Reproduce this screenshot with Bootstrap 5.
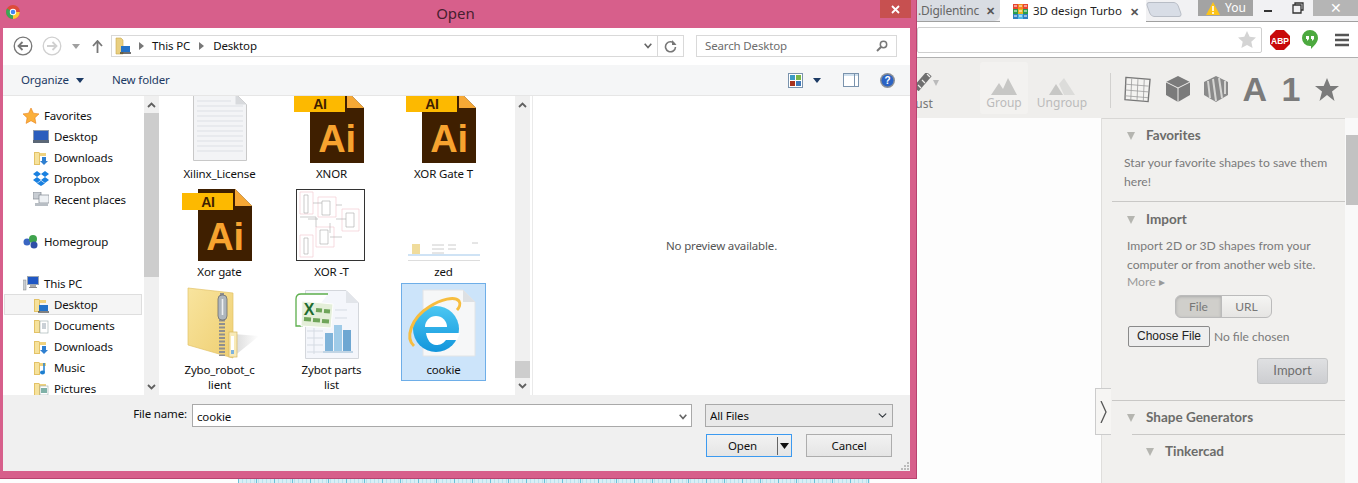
<!DOCTYPE html>
<html lang="en">
<head>
<meta charset="UTF-8" />
<title>Open</title>
<link href="https://cdn.jsdelivr.net/npm/bootstrap@5.3.3/dist/css/bootstrap.min.css" rel="stylesheet" />
<style>
html, body { height: 100%; margin: 0; overflow: hidden; background: #fff; }
body { font-family: "Noto Sans", sans-serif; font-size: 11.5px; color: #1a1a1a; }
svg { display: block; flex: none; }

/* browser behind the dialog */
.page-back { height: 483px; width: 1358px; }
.tab-strip { height: 22px; background: #f1f1f3; border-bottom: 1px solid #a0a0a0; }
.tab-off { width: 1000px; flex: none; height: 21px; background: #d9dde3; color: #666; font-size: 12px; letter-spacing: -.2px; padding-right: 5px; border-radius: 0 0 6px 0; justify-content: flex-end; }
.tab-off span { margin-right: 7px; }
.tab-off .tab-x { margin-right: 0; }
.tab-x { font-size: 11px; font-weight: 700; color: #555; line-height: 1; letter-spacing: 0; }
.tab-on { width: 146px; flex: none; height: 22px; background: #fff; font-size: 11.5px; color: #222; padding-left: 13px; margin-bottom: -1px; gap: 5px; }
.tab-on .tab-name { width: 92px; white-space: nowrap; }
.tab-new { width: 32px; height: 15px; flex: none; margin: 2px 0 0 2px; background: #d8dde6; border: 1px solid #b8bdc6; border-radius: 4px; transform: skewX(20deg); }
.you-tag { width: 55px; height: 16px; flex: none; margin-left: 18px; background: #a3a3a3; color: #fff; font-size: 12px; gap: 5px; padding-left: 8px; }
.win-btns { margin-left: auto; height: 16px; }
.win-btn { width: 30px; height: 16px; }
.win-close { width: 45px; height: 16px; background: #b5b5b5; color: #fff; font-size: 14px; line-height: 16px; text-align: center; }
.url-row { height: 36px; background: #fff; border-bottom: 1px solid #b0b0b0; padding-left: 917px; }
.omni { width: 345px; height: 26px; border: 1px solid #cfcfcf; border-radius: 2px; padding-right: 5px; }
.app-bar { height: 60px; background: #efeeec; position: relative; padding-left: 891px; color: #bbb; }
.adj-btn { width: 48px; font-size: 12px; color: #777; padding-top: 15px; text-align: center; }
.adj-btn svg { margin-bottom: 4px; }
.grp-btn { width: 48px; height: 52px; margin-left: 41px; margin-top: 4px; background: #f3f2f0; border-radius: 3px; font-size: 12px; line-height: 1; padding-top: 16px; }
.ungrp-btn { width: 56px; margin-left: 6px; font-size: 12px; line-height: 1; padding-top: 20px; }
.grp-btn svg, .ungrp-btn svg { margin-bottom: 2px; }
.bar-rule { width: 1px; height: 35px; background: #d2d1cf; margin: 15px 0 0 20px; }
.bar-tools { margin-left: 13px; width: 215px; height: 60px; color: #7b7b7b; justify-content: space-between; padding-top: 2px; }
.big-glyph { font-family: "Liberation Sans", sans-serif; font-weight: 700; font-size: 34px; line-height: 1; color: #7b7b7b; }
.main-row { height: 365px; }
.work-area { width: 1101px; background: #fdfdfd; }
.work-grid { margin: auto 0 0 238px; width: 632px; height: 5px; background-color: #d8eff6; background-image: repeating-linear-gradient(90deg, #6cc0d8 0 1px, transparent 1px 18px), repeating-linear-gradient(90deg, #b9e2ee 0 1px, transparent 1px 4px); }
.side-panel { width: 244px; background: #f1f0ee; border-left: 1px solid #dfdedc; box-shadow: inset 0 1px #d8d7d5; font-family: Lato, sans-serif; font-size: 12.15px; color: #7a7a7a; position: relative; }
.side-head { font-weight: 700; font-size: 13.5px; color: #6c6c6a; gap: 11px; padding-left: 25px; height: 17px; line-height: 17px; }
.side-head::before { content: ""; border-left: 4px solid transparent; border-right: 4px solid transparent; border-top: 8px solid #b5b5b0; }
.side-fav { height: 84px; padding-top: 9px; border-bottom: 1px solid #c9c8c6; margin-left: 10px; }
.side-fav .side-head { padding-left: 15px; }
.side-copy { line-height: 19px; margin: 9px 0 0 12px; width: 225px; }
.side-imp { height: 199px; margin-left: 10px; border-bottom: 1px solid #c9c8c6; padding-top: 9px; }
.side-imp .side-head { padding-left: 15px; }
.side-imp .side-copy { margin-left: 15px; margin-top: 8px; }
.more-link { display: block; line-height: 16px; color: #999; }
.seg-group { margin: 5px 0 0 63px; height: 23px; width: 97px; }
.seg-group .btn { font-size: 12px; padding: 0; color: #777; border: 1px solid #bbb; background: linear-gradient(#f5f5f3, #e6e5e3); font-family: Lato, sans-serif; }
.seg-group .btn.seg-on { background: #d0cfcb; box-shadow: inset 0 1px 3px #aaa; width: 47px; flex: none; }
.file-pick { margin: 8px 0 0 16px; gap: 4px; font-size: 12px; font-family: Lato, sans-serif; }
.pick-btn { font-family: "Liberation Sans", sans-serif; font-size: 12px; color: #222; border: 1px solid #8a8a8a; border-radius: 2px; background: #eee; padding: 0; width: 82px; height: 21px; line-height: 19px; text-align: center; }
.do-import { display: block; width: 71px; height: 26px; margin: 11px 0 0 145px; padding: 0; font-family: Lato, sans-serif; font-size: 13px; color: #6f6f6f; border: 1px solid #c4c5c6; border-radius: 3px; background: linear-gradient(#dfe0e2, #cdced1); }
.side-gen { padding-top: 8px; margin-left: 10px; }
.side-gen .side-head { padding-left: 15px; }
.sub-rule { border-top: 1px solid #c9c8c6; margin: 8px 0 0 20px; padding-top: 8px; }
.sub-rule .side-head { padding-left: 14px; }
.drawer-tab { position: absolute; left: -7px; top: 270px; width: 16px; height: 47px; background: #f6f5f3; border: 1px solid #ccc; border-right: 0; }
.page-scroll { width: 13px; background: #f9f9f9; }
.page-thumb { height: 70px; margin-top: 17px; background: #c2c2c2; margin-left: 1px; }

/* file dialog */
.file-dlg { position: absolute; left: 0; top: 0; width: 917px; height: 479px; background: #d75f8b; border: 1px solid #b9426f; border-width: 0 1px 1px 0; padding: 28px 6px 7px 3px; letter-spacing: -.15px; }
.dlg-title { position: absolute; left: 1px; right: 0; top: 2px; text-align: center; font-size: 15px; letter-spacing: 0; color: #47202f; line-height: 22px; padding-right: 6px; }
.dlg-close { position: absolute; left: 880px; top: 0; width: 31px; height: 18px; background: #c75050; color: #fff; }
.chrome-logo { position: absolute; left: 6px; top: 5px; }
.dlg-body { height: 443px; background: #fff; }
.addr-row { height: 37px; background: #fff; }
.addr-box { position: absolute; left: 111px; top: 35px; width: 573px; height: 22px; border: 1px solid #d9d9d9; gap: 0; }
.crumb { color: #111; }
.srch-box { position: absolute; left: 696px; top: 35px; width: 201px; height: 22px; border: 1px solid #d9d9d9; padding: 0 8px; color: #6d6d6d; }
.tool-row { height: 31px; background: #f5f6f7; border-bottom: 1px solid #e6e6e6; padding-left: 18px; color: #1c3a64; }
.mid-row { height: 299px; }
.tree-pane { width: 141px; padding-top: 9px; overflow: hidden; background: #fff; }
.tree-list .list-group-item { height: 21px; padding: 0 0 0 20px; border: 0; font-size: 11.5px; color: #111; gap: 5px; line-height: 21px; background: transparent; display: flex; align-items: center; }
.tree-list .list-group-item.tree-sub { padding-left: 30px; }
.tree-list .tree-gap { margin-top: 21px; }
.tree-list .list-group-item.tree-sel { background: #f5f5f5; box-shadow: inset 0 0 0 1px #dedede; margin: 0 2px 0 1px; padding-left: 29px; }
.dlg-scroll { width: 15px; background: #f0f0f0; padding-top: 0; }
.file-pane { width: 356px; overflow: hidden; background: #fff; }
.file-grid { display: grid; grid-template-columns: repeat(3, 85px); grid-auto-rows: 98px; column-gap: 27px; margin: -9px 0 0 18px; }
.file-cell { text-align: center; padding-top: 1px; line-height: 15px; color: #111; border: 1px solid transparent; height: 98px; }
.file-cell.is-picked { background: #cce4fa; border-color: #6eaee8; }
.file-thumb { height: 77px; }
.ai-thumb { margin: 0 5px 3px 0; }
.pv-pane { margin-left: 2px; border-left: 1px solid #eaeaea; color: #555; }
.dlg-foot { flex: 1; background: #f0f0f0; position: relative; }
.foot-row { padding-top: 9px; height: 32px; }
.fname-label { width: 188px; text-align: right; padding-right: 4px; color: #111; line-height: 20px; }
.fname-box { width: 500px; height: 23px; margin-left: 1px; border: 1px solid #a9a9a9; background: #fff; padding: 2px 4px 0; }
.fname-box input { border: 0; outline: 0; flex: 1; font-size: 11.5px; letter-spacing: -.15px; padding: 0; color: #111; font-family: inherit; min-width: 0; }
.type-pick { width: 188px; height: 23px; margin-left: 13px; border: 1px solid #a9a9a9; border-radius: 0; padding: 0 4px; font-size: 11.5px; letter-spacing: -.15px; color: #111; font-family: inherit; background-color: #e9e9e9; background-position: right 4px center; background-size: 11px 9px; box-shadow: none; }
.foot-btns { padding: 7px 18px 0 0; gap: 14px; }
.win-cmd { width: 86px; height: 23px; padding: 0; border: 1px solid #adadad; border-radius: 0; background: linear-gradient(#f2f2f2, #e5e5e5); color: #111; font-size: 11.5px; font-family: inherit; letter-spacing: -.15px; line-height: 21px; }
.win-cmd.is-default { border-color: #3c9af0; border-width: 1px; display: flex; align-items: center; }
.open-txt { flex: 1; padding-left: 1px; }
.open-split { width: 1px; height: 18px; background: #666; margin-right: 2px; }
.grip-dots { position: absolute; right: 1px; bottom: 1px; }
</style>
</head>
<body>

<svg width="0" height="0" style="position:absolute">
  <defs>
    <symbol id="fld" viewBox="0 0 16 16"><path d="M1 2h5l1 1v12H1z" fill="#e3c266"/><path d="M2 3h4v11H2z" fill="#f6e29c"/><path d="M7 3h6v3H7z" fill="#efd27f"/></symbol>
    <symbol id="ai" viewBox="0 0 70 72">
      <path d="M16 0h37l17 17v55H16z" fill="#3f1f00"/>
      <path d="M53 0l17 17H53z" fill="#f6a835"/>
      <rect x="0" y="4" width="51" height="17" fill="#fdb900"/>
      <text x="26" y="18" font-family="Liberation Sans" font-weight="700" font-size="14" text-anchor="middle" fill="#3f1f00">AI</text>
      <text x="43" y="61" font-family="Liberation Sans" font-weight="700" font-size="38" text-anchor="middle" fill="#f7a32f">Ai</text>
    </symbol>
    <linearGradient id="ieBlue" x1="0" y1="0" x2="0" y2="1"><stop offset="0" stop-color="#4cc7f2"/><stop offset="1" stop-color="#1195dc"/></linearGradient>
    <linearGradient id="zipFold" x1="0" y1="0" x2="1" y2="1"><stop offset="0" stop-color="#f8e49e"/><stop offset="1" stop-color="#efcf72"/></linearGradient>
    <linearGradient id="zipShade" x1="0" y1="0" x2="1" y2="0"><stop offset="0" stop-color="#d9d9d9"/><stop offset="1" stop-color="#ffffff"/></linearGradient>
  </defs>
</svg>

<div class="page-back">
  <div class="tab-strip d-flex align-items-start">
    <div class="tab-off d-flex align-items-center"><span>.Digilentinc</span><span class="tab-x">&#10005;</span></div>
    <div class="tab-on d-flex align-items-center">
      <svg width="15" height="15" viewBox="0 0 15 15">
        <rect width="5" height="5" fill="#e8442e"/><rect x="5" width="5" height="5" fill="#f58a1f"/><rect x="10" width="5" height="5" fill="#e8442e"/>
        <rect y="5" width="5" height="5" fill="#2a9d4a"/><rect x="5" y="5" width="5" height="5" fill="#e9b21f"/><rect x="10" y="5" width="5" height="5" fill="#2a9d4a"/>
        <rect y="10" width="5" height="5" fill="#2f7fc1"/><rect x="5" y="10" width="5" height="5" fill="#4fb7e6"/><rect x="10" y="10" width="5" height="5" fill="#2f7fc1"/>
        <path d="M1 2h3M6 2h3M11 2h3M1 7h3M6 7h3M11 7h3M1 12h3M6 12h3M11 12h3" stroke="#fff" stroke-width="1"/>
      </svg>
      <span class="tab-name">3D design Turbo</span><span class="tab-x">&#10005;</span>
    </div>
    <div class="tab-new"></div>
    <div class="you-tag d-flex align-items-center">
      <svg width="14" height="13" viewBox="0 0 14 13"><path d="M7 0l7 13H0z" fill="#fcc419"/><path d="M7 4v5M7 10v2" stroke="#fff" stroke-width="1.6"/></svg>
      <span>You</span>
    </div>
    <div class="win-btns d-flex">
      <div class="win-btn d-flex align-items-center justify-content-center"><svg width="12" height="12" viewBox="0 0 12 12"><path d="M2 9h8" stroke="#333" stroke-width="2"/></svg></div>
      <div class="win-btn d-flex align-items-center justify-content-center"><svg width="12" height="12" viewBox="0 0 12 12"><path d="M3 3V1h8v7H9M1 3h8v8H1z" fill="none" stroke="#333" stroke-width="1.3"/></svg></div>
      <div class="win-close">&#10005;</div>
    </div>
  </div>
  <div class="url-row d-flex align-items-center">
    <div class="omni d-flex align-items-center justify-content-end">
      <svg width="18" height="17" viewBox="0 0 18 17"><path d="M9 0l2.7 5.8 6.3.7-4.7 4.2 1.3 6.3L9 14l-5.6 3 1.3-6.3L0 6.5l6.3-.7z" fill="#d4d4d4"/></svg>
    </div>
    <svg class="ms-2" width="20" height="20" viewBox="0 0 20 20"><path d="M6 0h8l6 6v8l-6 6H6l-6-6V6z" fill="#c80a0a"/><text x="10" y="13.5" font-family="Liberation Sans" font-weight="700" font-size="8.5" text-anchor="middle" fill="#fff">ABP</text></svg>
    <svg style="margin-left:12px" width="16" height="19" viewBox="0 0 16 19"><path d="M8 0a8 8 0 0 1 8 8c0 4-4 8-7 11v-3H8A8 8 0 0 1 8 0z" fill="#4ca93f"/><path d="M4 6h3v3l-2 2v-2H4zM9 6h3v3l-2 2v-2H9z" fill="#fff"/></svg>
    <svg style="margin-left:17px" width="14" height="14" viewBox="0 0 14 14"><path d="M0 2h14M0 7h14M0 12h14" stroke="#555" stroke-width="2.4"/></svg>
  </div>
  <div class="app-bar d-flex">
    <div class="adj-btn">
      <svg width="48" height="18" viewBox="0 0 48 18"><path d="M38 1L25 16" stroke="#6f6f6f" stroke-width="7"/><path d="M36 1l3 3M31 7l3 3M27 12l3 3" stroke="#efeeec" stroke-width="1.200"/><path d="M42 7h6l-3 6z" fill="#bbb"/></svg>
      Adjust
    </div>
    <div class="grp-btn text-center">
      <svg class="mx-auto" width="26" height="17" viewBox="0 0 26 17"><path d="M0 17l8-12 4 6 5-11 9 17z" fill="#c7c7c5"/></svg>Group
    </div>
    <div class="ungrp-btn text-center">
      <svg class="mx-auto" width="26" height="17" viewBox="0 0 26 17"><path d="M0 17l7-11 7 11z" fill="#c7c7c5"/><path d="M10 6l5-6 11 17H15z" fill="#dcdcda"/></svg>Ungroup
    </div>
    <div class="bar-rule"></div>
    <div class="bar-tools d-flex align-items-center">
      <svg width="27" height="27" viewBox="0 0 28 27"><path d="M2 1l25 2-2 23-24-2z" fill="#f4f3f1" stroke="#777" stroke-width="1.4"/><path d="M1.5 8l24 2M1.5 14l24 2M1 20l24 2M8 2L7 25M14.500 2l-1 23M21 3l-1 23" stroke="#999" stroke-width=".8"/></svg>
      <svg width="24" height="26" viewBox="0 0 24 26"><path d="M12 0l12 6v13l-12 7L0 19V6z" fill="#7b7b7b"/><path d="M0 6l12 6 12-6M12 12v14" fill="none" stroke="#efeeec" stroke-width="1"/></svg>
      <svg width="24" height="26" viewBox="0 0 24 26"><path d="M12 0l12 6v13l-12 7L0 19V6z" fill="#8a8a8a"/><path d="M4 5l2 17M9 3l3 22M15 2l3 20M21 5v13" fill="none" stroke="#d5d5d3" stroke-width="2"/></svg>
      <span class="big-glyph">A</span>
      <span class="big-glyph">1</span>
      <svg width="24" height="23" viewBox="0 0 24 23"><path d="M12 0l3.300 8H24l-7 5.500L19.500 23 12 17l-7.500 6L7 13.500 0 8h8.700z" fill="#7b7b7b"/></svg>
    </div>
  </div>
  <div class="main-row d-flex">
    <div class="work-area d-flex flex-column"><div class="work-grid"></div></div>
    <div class="side-panel">
      <div class="side-fav">
        <div class="side-head d-flex align-items-center">Favorites</div>
        <div class="side-copy">Star your favorite shapes to save them here!</div>
      </div>
      <div class="side-imp">
        <div class="side-head d-flex align-items-center">Import</div>
        <div class="side-copy">Import 2D or 3D shapes from your computer or from another web site.<span class="more-link">More &#9656;</span></div>
        <div class="btn-group seg-group"><button class="btn seg-on">File</button><button class="btn">URL</button></div>
        <div class="file-pick d-flex align-items-center"><button class="pick-btn">Choose File</button><span>No file chosen</span></div>
        <button class="btn do-import">Import</button>
      </div>
      <div class="side-gen">
        <div class="side-head d-flex align-items-center">Shape Generators</div>
        <div class="sub-rule"><div class="side-head d-flex align-items-center">Tinkercad</div></div>
      </div>
      <div class="drawer-tab d-flex align-items-center justify-content-center">
        <svg width="8" height="22" viewBox="0 0 8 22"><path d="M1 0l5 11-5 11" fill="none" stroke="#555" stroke-width="1.300"/></svg>
      </div>
    </div>
    <div class="page-scroll"><div class="page-thumb"></div></div>
  </div>
</div>

<div class="file-dlg d-flex flex-column">
  <svg class="chrome-logo" width="14" height="14" viewBox="0 0 14 14">
    <circle cx="7" cy="7" r="7" fill="#dd4b39"/>
    <path d="M7 7L1 3.500A7 7 0 0 0 7 14z" fill="#3aa757"/>
    <path d="M7 7h6.800A7 7 0 0 1 7 14z" fill="#fcc934"/>
    <circle cx="7" cy="7" r="3.200" fill="#fff"/><circle cx="7" cy="7" r="2.300" fill="#4285f4"/>
  </svg>
  <div class="dlg-title">Open</div>
  <div class="dlg-close d-flex align-items-center justify-content-center">
    <svg width="9" height="9" viewBox="0 0 9 9"><path d="M1 1l7 7M8 1L1 8" stroke="#fff" stroke-width="1.800"/></svg>
  </div>
  <div class="dlg-body d-flex flex-column">
    <div class="addr-row">
      <svg style="position:absolute;left:13px;top:36px" width="20" height="20" viewBox="0 0 20 20"><circle cx="10" cy="10" r="8.800" fill="#fff" stroke="#777" stroke-width="1.300"/><path d="M15 10H6M9.500 6L5.500 10l4 4" fill="none" stroke="#777" stroke-width="1.800"/></svg>
      <svg style="position:absolute;left:42px;top:36px" width="20" height="20" viewBox="0 0 20 20"><circle cx="10" cy="10" r="8.800" fill="#fff" stroke="#d0d0d0" stroke-width="1.300"/><path d="M5 10h9M10.500 6l4 4-4 4" fill="none" stroke="#d0d0d0" stroke-width="1.800"/></svg>
      <svg style="position:absolute;left:72px;top:44px" width="8" height="5" viewBox="0 0 8 5"><path d="M0 0h8L4 5z" fill="#a0a0a0"/></svg>
      <svg style="position:absolute;left:92px;top:40px" width="11" height="13" viewBox="0 0 11 13"><path d="M5.500 13V2M1 6l4.500-5L10 6" fill="none" stroke="#777" stroke-width="1.800"/></svg>
      <div class="addr-box d-flex align-items-center">
        <svg style="margin-left:3px" width="16" height="18" viewBox="0 0 16 18"><path d="M1 1h5l2 2v14H1z" fill="#e9cf80" stroke="#c9a94f" stroke-width=".6"/><rect x="6" y="9" width="9" height="6" fill="#2472c8"/><path d="M5 16h11" stroke="#333" stroke-width="1.400"/></svg>
        <svg style="margin-left:8px" width="5" height="8" viewBox="0 0 5 8"><path d="M0 0l5 4-5 4z" fill="#777"/></svg>
        <span class="crumb" style="margin-left:8px">This PC</span>
        <svg style="margin-left:9px" width="5" height="8" viewBox="0 0 5 8"><path d="M0 0l5 4-5 4z" fill="#777"/></svg>
        <span class="crumb" style="margin-left:9px">Desktop</span>
        <svg class="ms-auto" width="8" height="6" viewBox="0 0 8 6"><path d="M.700 .700L4 4.500 7.300 .700" fill="none" stroke="#666" stroke-width="1.600"/></svg>
        <div style="width:1px;height:20px;background:#d9d9d9;margin-left:5px"></div>
        <svg style="margin:0 6px" width="13" height="13" viewBox="0 0 13 13"><path d="M10.800 4.200A5 5 0 1 0 11.500 7" fill="none" stroke="#777" stroke-width="1.600"/><path d="M8 0v5h4.500z" fill="#777"/></svg>
      </div>
      <div class="srch-box d-flex align-items-center justify-content-between"><span>Search Desktop</span>
        <svg width="12" height="12" viewBox="0 0 12 12"><circle cx="7.500" cy="4.500" r="3.200" fill="none" stroke="#777" stroke-width="1.500"/><path d="M5 7l-4 4" stroke="#777" stroke-width="2"/></svg>
      </div>
    </div>
    <div class="tool-row d-flex align-items-center">
      <span>Organize</span>
      <svg style="margin-left:7px" width="8" height="5" viewBox="0 0 8 5"><path d="M0 0h8L4 5z" fill="#1c3a64"/></svg>
      <span style="margin-left:28px">New folder</span>
      <svg style="margin-left:auto" width="15" height="15" viewBox="0 0 15 15"><rect x=".5" y=".5" width="14" height="14" fill="#fff" stroke="#7a93ad"/><rect x="2" y="2" width="5" height="5" fill="#3d9bc4"/><rect x="8" y="2" width="5" height="5" fill="#7ab648"/><rect x="2" y="8" width="5" height="5" fill="#a8321e"/><rect x="8" y="8" width="5" height="5" fill="#3e78b8"/></svg>
      <svg style="margin-left:10px" width="8" height="5" viewBox="0 0 8 5"><path d="M0 0h8L4 5z" fill="#1c3a64"/></svg>
      <svg style="margin-left:22px" width="16" height="14" viewBox="0 0 16 14"><rect x=".5" y=".5" width="15" height="13" fill="#fff" stroke="#7a93ad"/><rect x="1" y="1" width="14" height="2" fill="#cfe0ee"/><path d="M11.500 1v12" stroke="#7a93ad"/></svg>
      <svg style="margin:0 15px 0 21px" width="15" height="15" viewBox="0 0 15 15"><circle cx="7.500" cy="7.500" r="7.500" fill="#8a8f96"/><circle cx="7.500" cy="7.500" r="6" fill="#2b63c4"/><text x="7.500" y="11" font-family="Liberation Sans" font-weight="700" font-size="10" text-anchor="middle" fill="#fff">?</text></svg>
    </div>
    <div class="mid-row d-flex">
      <div class="tree-pane">
        <div class="list-group tree-list rounded-0">
          <div class="list-group-item"><svg width="16" height="16" viewBox="0 0 16 16"><path d="M8 0l2.400 5.200 5.600.7-4.100 3.900 1 5.600L8 12.700l-4.900 2.700 1-5.600L0 5.900l5.600-.7z" fill="#fbb03b" stroke="#e8801a" stroke-width=".6"/></svg>Favorites</div>
          <div class="list-group-item tree-sub"><svg width="16" height="14" viewBox="0 0 16 14"><rect width="16" height="12" fill="#8a9ab0"/><rect x="1" y="1" width="14" height="9" fill="#2a5dbd"/><rect y="10" width="16" height="3" fill="#5b6776"/></svg>Desktop</div>
          <div class="list-group-item tree-sub"><svg width="16" height="16" viewBox="0 0 16 16"><use href="#fld"/><path d="M9 7h4v4h2l-4 4-4-4h2z" fill="#2f7fd0"/></svg>Downloads</div>
          <div class="list-group-item tree-sub"><svg width="16" height="15" viewBox="0 0 16 15"><path d="M4 0l4 3-4 3-4-3zM12 0l4 3-4 3-4-3zM4 6l4 3-4 3-4-3zM12 6l4 3-4 3-4-3zM4 12.500l4-2.800 4 2.800-4 2.500z" fill="#1a81e0"/></svg>Dropbox</div>
          <div class="list-group-item tree-sub"><svg width="16" height="15" viewBox="0 0 16 15"><rect x="0" y="0" width="8" height="7" fill="#c8cdd3" stroke="#808890" stroke-width=".7"/><rect x="6" y="3" width="10" height="8" fill="#eef1f4" stroke="#808890" stroke-width=".7"/><rect x="2" y="11" width="13" height="3" fill="#b8bec4"/></svg>Recent places</div>
          <div class="list-group-item tree-gap"><svg width="16" height="15" viewBox="0 0 16 15"><circle cx="4" cy="8" r="3.500" fill="#3a66c2"/><circle cx="10" cy="5" r="4" fill="#3fa34d"/><circle cx="11" cy="11" r="3.500" fill="#2f4fa8"/></svg>Homegroup</div>
          <div class="list-group-item tree-gap"><svg width="16" height="15" viewBox="0 0 16 15"><rect x="4" y="0" width="12" height="9" fill="#9aa6b4"/><rect x="5" y="1" width="10" height="7" fill="#1f57c4"/><rect x="7" y="9" width="6" height="2" fill="#aaa"/><rect x="6" y="11" width="8" height="1" fill="#888"/><rect x="0" y="4" width="3" height="10" fill="#c9ced2" stroke="#888" stroke-width=".5"/></svg>This PC</div>
          <div class="list-group-item tree-sub tree-sel"><svg width="16" height="16" viewBox="0 0 16 16"><use href="#fld"/><rect x="6" y="8" width="9" height="6" fill="#2472c8"/><path d="M5 15h11" stroke="#333" stroke-width="1.200"/></svg>Desktop</div>
          <div class="list-group-item tree-sub"><svg width="16" height="16" viewBox="0 0 16 16"><use href="#fld"/><rect x="7" y="3" width="8" height="12" fill="#fff" stroke="#9aa" stroke-width=".6"/><path d="M9 6h4M9 8h4M9 10h4" stroke="#7a8a9a" stroke-width=".8"/></svg>Documents</div>
          <div class="list-group-item tree-sub"><svg width="16" height="16" viewBox="0 0 16 16"><use href="#fld"/><path d="M9 7h4v4h2l-4 4-4-4h2z" fill="#2f7fd0"/></svg>Downloads</div>
          <div class="list-group-item tree-sub"><svg width="16" height="16" viewBox="0 0 16 16"><use href="#fld"/><path d="M11 3v9" stroke="#1e7fd0" stroke-width="1.500"/><ellipse cx="9.500" cy="12.500" rx="2.500" ry="2" fill="#1e7fd0"/></svg>Music</div>
          <div class="list-group-item tree-sub"><svg width="16" height="16" viewBox="0 0 16 16"><use href="#fld"/><rect x="7" y="5" width="8" height="9" fill="#fff" stroke="#9aa" stroke-width=".6"/><rect x="8" y="7" width="6" height="5" fill="#7fb1a8"/></svg>Pictures</div>
        </div>
      </div>
      <div class="dlg-scroll d-flex flex-column justify-content-between align-items-center">
        <svg style="margin-top:6px" width="9" height="6" viewBox="0 0 9 6"><path d="M1 5l3.500-3.500L8 5" fill="none" stroke="#606060" stroke-width="1.800"/></svg>
        <div style="width:15px;height:164px;background:#cdcdcd;margin-top:5px"></div>
        <div style="flex:1"></div>
        <svg style="margin-bottom:5px" width="9" height="6" viewBox="0 0 9 6"><path d="M1 1l3.500 3.500L8 1" fill="none" stroke="#606060" stroke-width="1.800"/></svg>
      </div>
      <div class="file-pane">
        <div class="file-grid">
          <div class="file-cell">
            <div class="file-thumb d-flex align-items-end justify-content-center">
              <svg width="54" height="68" viewBox="0 0 54 68" style="margin-bottom:5px"><path d="M.5 .5h42l11 11v56H.5z" fill="#f3f4f6" stroke="#c8c8c8"/><path d="M42.500 .5v11h11z" fill="#d8dadd"/><path d="M4 8h34M4 13h46M4 18h46M4 23h46M4 28h46M4 33h46M4 38h46M4 43h46M4 48h46M4 53h46M4 58h46" stroke="#dde0e5"/></svg>
            </div>Xilinx_License
          </div>
          <div class="file-cell"><div class="file-thumb d-flex align-items-end justify-content-center"><svg class="ai-thumb" width="70" height="72"><use href="#ai"/></svg></div>XNOR</div>
          <div class="file-cell"><div class="file-thumb d-flex align-items-end justify-content-center"><svg class="ai-thumb" width="70" height="72"><use href="#ai"/></svg></div>XOR Gate T</div>

          <div class="file-cell"><div class="file-thumb d-flex align-items-end justify-content-center"><svg class="ai-thumb" width="70" height="72"><use href="#ai"/></svg></div>Xor gate</div>
          <div class="file-cell"><div class="file-thumb d-flex align-items-end justify-content-center">
            <svg width="69" height="72" viewBox="0 0 69 72" style="margin:0 2px 3px 0"><rect x=".5" y=".5" width="68" height="71" fill="#fff" stroke="#333"/><path d="M4 3h13v22H4zM22 8h18v20H22zM46 20h17v22H46zM20 38h18v20H20zM4 46h13v22H4z" fill="none" stroke="#f3ccd2" stroke-width=".7"/><path d="M8 6h4v18H8zM26 12h8v14h-8zM50 24h8v14h-8zM24 41h8v14h-8zM8 49h4v16H8zM12 30h10M40 16h6M34 34V44M4 28h16v10M17 14h9M40 30h10M34 48h12" fill="none" stroke="#aaa" stroke-width=".6"/></svg>
          </div>XOR -T</div>
          <div class="file-cell"><div class="file-thumb d-flex align-items-end justify-content-center">
            <svg width="72" height="20" viewBox="0 0 72 20" style="margin-bottom:3px"><rect width="72" height="20" fill="#fff"/><rect y="13" width="72" height="2" fill="#cfe3f5"/><rect x="4" y="3" width="8" height="10" fill="#f0dc9c"/><path d="M24 4h12M24 8h12M24 12h12M40 4h8M40 8h8M64 2h6" stroke="#ccc"/><path d="M0 19.500h72" stroke="#ddd"/></svg>
          </div>zed</div>

          <div class="file-cell"><div class="file-thumb d-flex align-items-end justify-content-center">
            <svg width="74" height="74" viewBox="0 0 74 74" style="margin:0 0 2px 7px">
              <path d="M47 48L73 50 47 71z" fill="url(#zipShade)"/>
              <path d="M2 2L47 7V72L2 59z" fill="url(#zipFold)" stroke="#e3c368" stroke-width=".7"/>
              <path d="M36 30V70" stroke="#8f8f8f" stroke-width="6" stroke-dasharray="2 1.500"/>
              <path d="M36 7v8" stroke="#8f8f8f" stroke-width="4"/>
              <rect x="32" y="9" width="9" height="25" rx="4" fill="#aeb6bd" stroke="#6d6d6d" stroke-width=".8"/><path d="M36.500 13v16" stroke="#eef0f2" stroke-width="1.600"/>
              <rect x="43" y="46" width="8" height="25" fill="#f8eab8" stroke="#d8b860" stroke-width=".7"/><rect x="45" y="50" width="3" height="14" fill="#fff"/><rect x="45" y="64" width="3" height="4" fill="#7db3e0"/>
            </svg></div>Zybo_robot_c<br>lient</div>
          <div class="file-cell"><div class="file-thumb d-flex align-items-end justify-content-center">
            <svg width="65" height="72" viewBox="0 0 65 72" style="margin:0 8px 2px 0">
              <path d="M10.500 2.500H51L63.500 15V70.500H10.500z" fill="#f4f6fb" stroke="#d4d7dc"/><path d="M51 2.500V15h12.500z" fill="#e2e5ea"/>
              <path d="M12 43h16M12 50h16M12 57h16M12 64h16M19 40v26M40 22h12M40 30h12" stroke="#d5dbe3"/>
              <rect x="30" y="45" width="8" height="18" fill="#7fb3d9"/><rect x="39" y="37" width="8" height="26" fill="#9fcbe8"/><rect x="48" y="42" width="8" height="21" fill="#6ea7d2"/>
              <path d="M28 64h30" stroke="#8fb4cf"/>
              <path d="M33 6H6Q1 6 1 11V38H8" fill="#fff" stroke="#5cae4c" stroke-width="1.300"/>
              <path d="M7 13l31 3-2 24-30-2z" fill="#e4efd9" stroke="#fff"/>
              <path d="M21 22l6 .500M29 23l6 .500M9 31l7 .500M18 32l7 .500M27 33l7 .500" stroke="#6fa55a" stroke-width="4"/>
              <text x="14" y="27" font-family="Liberation Sans" font-weight="700" font-size="16" text-anchor="middle" fill="#1f6b30">X</text>
            </svg></div>Zybot parts<br>list</div>
          <div class="file-cell is-picked"><div class="file-thumb d-flex align-items-end justify-content-center">
            <svg width="72" height="70" viewBox="0 0 72 70" style="margin:0 5px 4px 0">
              <path d="M18 2H58L70 14V68H18z" fill="#f6f7f8" stroke="#e2e4e6"/><path d="M58 2V14H70z" fill="#dde0e3"/>
              <circle cx="31" cy="41" r="23" fill="url(#ieBlue)"/>
              <path d="M20 39a11 11 0 0 1 22 0z" fill="#fff"/>
              <path d="M21 45H55L52 52H41c-3 4-6 5-10 5-5 0-9-5-10-12z" fill="#fff"/>
              <path d="M9 58C0 50 6 30 24 19 36 11 50 8 54 13 56 16 54 20 52 22" fill="none" stroke="#f7bd3f" stroke-width="3"/>
            </svg></div>cookie</div>
        </div>
      </div>
      <div class="dlg-scroll d-flex flex-column align-items-center">
        <svg style="margin-top:6px" width="9" height="6" viewBox="0 0 9 6"><path d="M1 5l3.500-3.500L8 5" fill="none" stroke="#606060" stroke-width="1.800"/></svg>
        <div style="width:15px;height:17px;background:#cdcdcd;margin-top:253px"></div>
        <svg style="margin-top:5px" width="9" height="6" viewBox="0 0 9 6"><path d="M1 1l3.500 3.500L8 1" fill="none" stroke="#606060" stroke-width="1.800"/></svg>
      </div>
      <div class="pv-pane flex-grow-1 d-flex align-items-center justify-content-center">No preview available.</div>
    </div>
    <div class="dlg-foot">
      <div class="foot-row d-flex">
        <label class="fname-label" for="fname">File name:</label>
        <div class="fname-box d-flex align-items-center">
          <input id="fname" type="text" value="cookie">
          <svg width="8" height="6" viewBox="0 0 8 6"><path d="M.700 .700L4 4.500 7.300 .700" fill="none" stroke="#666" stroke-width="1.600"/></svg>
        </div>
        <select class="form-select type-pick"><option>All Files</option></select>
      </div>
      <div class="foot-btns d-flex justify-content-end">
        <button class="btn win-cmd is-default"><span class="open-txt">Open</span><span class="open-split"></span><svg style="margin-right:2px" width="9" height="6" viewBox="0 0 9 6"><path d="M0 0h9L4.500 6z" fill="#111"/></svg></button>
        <button class="btn win-cmd">Cancel</button>
      </div>
      <svg class="grip-dots" width="9" height="9" viewBox="0 0 9 9"><path d="M7 1h2v2H7zM4 4h2v2H4zM7 4h2v2H7zM1 7h2v2H1zM4 7h2v2H4zM7 7h2v2H7z" fill="#bbb"/></svg>
    </div>
  </div>
</div>

</body>
</html>
